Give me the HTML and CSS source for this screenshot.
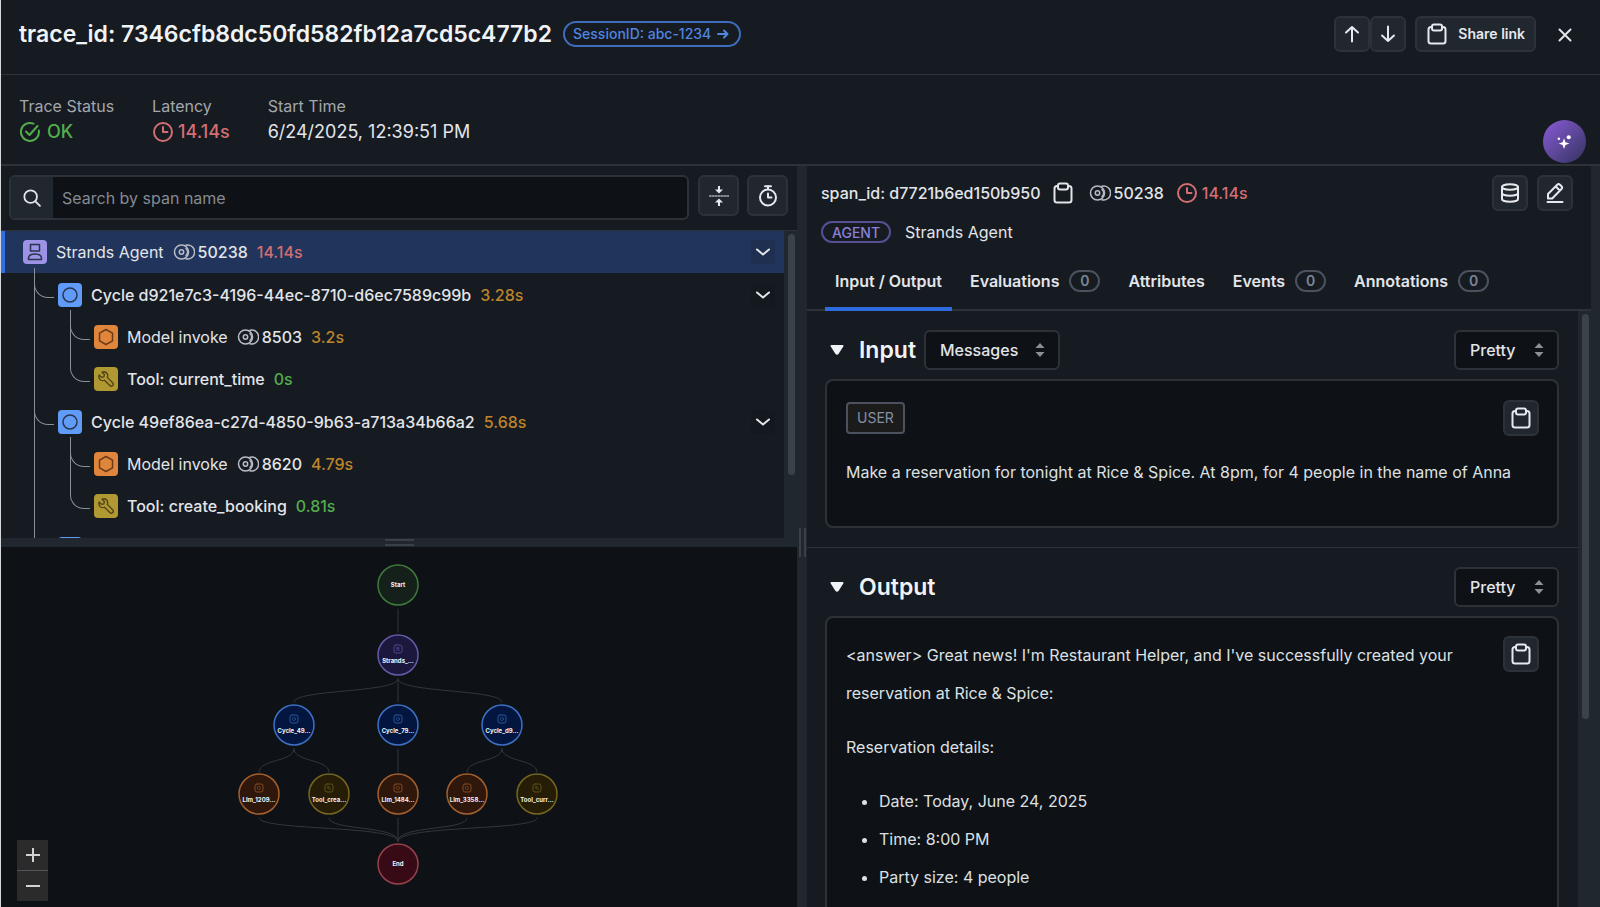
FILE: index.html
```
<!DOCTYPE html>
<html lang="en">
<head>
<meta charset="utf-8">
<title>Trace details</title>
<link rel="stylesheet" href="styles.css">
</head>
<body>
<svg class="defs" aria-hidden="true">
  <symbol id="clipboard" viewBox="0 0 20 22"><path d="M5 4H4a2.500 2.500 0 0 0-2.500 2.500V18A2.500 2.500 0 0 0 4 20.500h12a2.500 2.500 0 0 0 2.500-2.500V6.500A2.500 2.500 0 0 0 16 4h-1"/><rect x="5" y="1.500" width="10" height="6" rx="2"/></symbol>
  <symbol id="clock" viewBox="0 0 22 22"><circle cx="11" cy="11" r="9"/><path d="M11 6v5h4.500"/></symbol>
  <symbol id="check" viewBox="0 0 22 22"><path d="M19.800 9.500A9 9 0 1 1 14.500 2.700"/><path d="m7 10.500 3.500 3.500L18.500 5"/></symbol>
  <symbol id="tokens" viewBox="0 0 22 18"><circle cx="8.500" cy="9" r="7"/><circle cx="8.500" cy="9" r="2.200"/><path d="M13 2.200a7 7 0 1 1 0 13.600"/><path d="M13 5.500a5 5 0 0 1 0 7"/></symbol>
  <symbol id="chevron" viewBox="0 0 16 16"><path d="m2 5.500 6 5 6-5"/></symbol>
  <symbol id="sorter" viewBox="0 0 10 14"><path d="M5 0l4.500 5h-9zM5 14l4.500-5h-9z"/></symbol>
  <symbol id="agent" viewBox="0 0 16 18"><rect x="3.500" y="1.500" width="9" height="6.500"/><path d="M1.500 16.500v-1c0-2.500 2.300-4.500 6.500-4.500s6.500 2 6.500 4.500v1z"/></symbol>
  <symbol id="ring" viewBox="0 0 16 18"><circle cx="8" cy="9" r="7"/></symbol>
  <symbol id="hexagon" viewBox="0 0 16 18"><path d="M8 1.500 14.500 5.200v7.600L8 16.500 1.500 12.800V5.200z"/></symbol>
  <symbol id="wrench" viewBox="0 0 18 18"><path d="M1.300 4.500 4 7.200l2.600-.6.600-2.600L4.500 1.300C7 .4 9.300 1.200 10.300 3c.8 1.400.7 2.800.2 4.200l6 6a2.200 2.200 0 0 1-3.200 3.200l-6-6c-1.500.6-3 .6-4.300-.3C1.200 8.900.5 6.900 1.300 4.500z"/></symbol>
</svg>

<div class="app">
  <header class="topbar">
    <h1 class="title">trace_id: 7346cfb8dc50fd582fb12a7cd5c477b2</h1>
    <a class="session" href="#session">SessionID: abc-1234
      <svg viewBox="0 0 12 10"><path d="M1 5h9.500M7 1.500 10.500 5 7 8.500"/></svg>
    </a>
    <div class="topbar-actions">
      <div class="stepper">
        <button class="btn" aria-label="Previous trace"><svg class="i20" viewBox="0 0 20 20"><path d="M10 17.500V3M4 8.500 10 3l6 5.500"/></svg></button>
        <button class="btn" aria-label="Next trace"><svg class="i20" viewBox="0 0 20 20"><path d="M10 2.500V17M4 11.500 10 17l6-5.500"/></svg></button>
      </div>
      <button class="btn btn-share"><svg class="clip"><use href="#clipboard"/></svg>Share link</button>
      <button class="close" aria-label="Close"><svg viewBox="0 0 14 14"><path d="m1.500 1.500 11 11M12.500 1.500l-11 11"/></svg></button>
    </div>
  </header>

  <section class="summary">
    <dl class="stat"><dt>Trace Status</dt><dd class="ok"><svg class="i22"><use href="#check"/></svg>OK</dd></dl>
    <dl class="stat"><dt>Latency</dt><dd class="slow"><svg class="i22"><use href="#clock"/></svg>14.14s</dd></dl>
    <dl class="stat"><dt>Start Time</dt><dd>6/24/2025, 12:39:51 PM</dd></dl>
    <button class="assistant" aria-label="Assistant"><svg viewBox="0 0 16 16"><path d="M7.500 4.500 9 8.700l4.200 1.500L9 11.700 7.500 16 6 11.700 1.800 10.200 6 8.700z"/><circle cx="12.500" cy="3.500" r="2.200"/><circle cx="2" cy="5" r="1.400"/></svg></button>
  </section>

  <main class="panes">
    <section class="left">
      <div class="search-row">
        <div class="search">
          <label for="span-search" aria-label="Search"><svg viewBox="0 0 20 20"><circle cx="8.500" cy="8.500" r="7"/><path d="m13.800 13.800 5 5"/></svg></label>
          <input id="span-search" type="text" placeholder="Search by span name">
        </div>
        <button class="btn btn-lg" aria-label="Collapse all"><svg class="i20" viewBox="0 0 20 20"><path d="M10 0v4M10 20v-4"/><path d="M0 10h20" stroke-width="1" stroke-dasharray="2 1"/><path class="solid" d="M6 3.500h8L10 7.500zM6 16.500h8L10 12.500z"/></svg></button>
        <button class="btn btn-lg" aria-label="Toggle timing"><svg class="i22" viewBox="0 0 22 22"><circle cx="11" cy="12.500" r="8"/><path d="M11 8.500v4h3.500M8 1.200h6M11 1v3"/></svg></button>
      </div>

      <div class="tree-wrap">
        <ul class="tree">
          <li>
            <div class="row selected"><span class="kind agent"><svg><use href="#agent"/></svg></span><span>Strands Agent</span><span class="tokens"><svg><use href="#tokens"/></svg>50238</span><span class="slow">14.14s</span><button class="toggle" aria-label="Collapse"><svg><use href="#chevron"/></svg></button></div>
            <ul>
              <li>
                <div class="row"><span class="kind cycle"><svg><use href="#ring"/></svg></span><span class="name-id">Cycle d921e7c3-4196-44ec-8710-d6ec7589c99b</span><span class="mid">3.28s</span><button class="toggle" aria-label="Collapse"><svg><use href="#chevron"/></svg></button></div>
                <ul>
                  <li><div class="row"><span class="kind model"><svg><use href="#hexagon"/></svg></span><span>Model invoke</span><span class="tokens"><svg><use href="#tokens"/></svg>8503</span><span class="mid">3.2s</span></div></li>
                  <li><div class="row"><span class="kind tool"><svg><use href="#wrench"/></svg></span><span class="name-id">Tool: current_time</span><span class="ok">0s</span></div></li>
                </ul>
              </li>
              <li>
                <div class="row"><span class="kind cycle"><svg><use href="#ring"/></svg></span><span class="name-id">Cycle 49ef86ea-c27d-4850-9b63-a713a34b66a2</span><span class="mid">5.68s</span><button class="toggle" aria-label="Collapse"><svg><use href="#chevron"/></svg></button></div>
                <ul>
                  <li><div class="row"><span class="kind model"><svg><use href="#hexagon"/></svg></span><span>Model invoke</span><span class="tokens"><svg><use href="#tokens"/></svg>8620</span><span class="mid">4.79s</span></div></li>
                  <li><div class="row"><span class="kind tool"><svg><use href="#wrench"/></svg></span><span class="name-id">Tool: create_booking</span><span class="ok">0.81s</span></div></li>
                </ul>
              </li>
              <li><div class="row"><span class="kind cycle"><svg><use href="#ring"/></svg></span></div></li>
            </ul>
          </li>
        </ul>
        <div class="track"><div class="thumb thumb-tree"></div></div>
      </div>

      <div class="hsplit"><span></span></div>

      <div class="graph">
        <svg class="graph-svg" viewBox="0 0 320 340" role="img" aria-label="Agent graph">
          <g class="edges">
            <path d="M160 62v23M160 132v23M160 202v23M160 271v23"/>
            <path d="M160 132c0 14-104 10-104 23M160 132c0 14 104 10 104 23"/>
            <path d="M56 202c0 13-35 10-35 23M56 202c0 13 35 10 35 23M264 202c0 13-35 10-35 23M264 202c0 13 35 10 35 23"/>
            <path d="M21 271c0 13 139 7 139 23M91 271c0 13 69 7 69 23M229 271c0 13-69 7-69 23M299 271c0 13-139 7-139 23"/>
          </g>
          <g class="node start"><circle cx="160" cy="38" r="20"/><text x="160" y="40">Start</text></g>
          <g class="node n-agent"><circle cx="160" cy="108" r="20"/><rect x="156" y="98" width="8" height="8" rx="2"/><use href="#agent" x="158" y="100" width="4" height="4"/><text x="160" y="116">Strands_...</text></g>
          <g class="node n-cycle"><circle cx="56" cy="178" r="20"/><rect x="52" y="168" width="8" height="8" rx="2"/><use href="#ring" x="54" y="170" width="4" height="4"/><text x="56" y="186">Cycle_49...</text></g>
          <g class="node n-cycle"><circle cx="160" cy="178" r="20"/><rect x="156" y="168" width="8" height="8" rx="2"/><use href="#ring" x="158" y="170" width="4" height="4"/><text x="160" y="186">Cycle_79...</text></g>
          <g class="node n-cycle"><circle cx="264" cy="178" r="20"/><rect x="260" y="168" width="8" height="8" rx="2"/><use href="#ring" x="262" y="170" width="4" height="4"/><text x="264" y="186">Cycle_d9...</text></g>
          <g class="node n-model"><circle cx="21" cy="247" r="20"/><rect x="17" y="237" width="8" height="8" rx="2"/><use href="#hexagon" x="19" y="239" width="4" height="4"/><text x="21" y="255">Llm_1209...</text></g>
          <g class="node n-tool"><circle cx="91" cy="247" r="20"/><rect x="87" y="237" width="8" height="8" rx="2"/><use href="#wrench" x="89" y="239" width="4" height="4"/><text x="91" y="255">Tool_crea...</text></g>
          <g class="node n-model"><circle cx="160" cy="247" r="20"/><rect x="156" y="237" width="8" height="8" rx="2"/><use href="#hexagon" x="158" y="239" width="4" height="4"/><text x="160" y="255">Llm_1484...</text></g>
          <g class="node n-model"><circle cx="229" cy="247" r="20"/><rect x="225" y="237" width="8" height="8" rx="2"/><use href="#hexagon" x="227" y="239" width="4" height="4"/><text x="229" y="255">Llm_3358...</text></g>
          <g class="node n-tool"><circle cx="299" cy="247" r="20"/><rect x="295" y="237" width="8" height="8" rx="2"/><use href="#wrench" x="297" y="239" width="4" height="4"/><text x="299" y="255">Tool_curr...</text></g>
          <g class="node end"><circle cx="160" cy="317" r="20"/><text x="160" y="319">End</text></g>
        </svg>
        <div class="zoom">
          <button aria-label="Zoom in"><svg viewBox="0 0 16 16"><path d="M1 8h14M8 1v14"/></svg></button>
          <button aria-label="Zoom out"><svg viewBox="0 0 16 16"><path d="M1 8h14"/></svg></button>
        </div>
      </div>
    </section>

    <div class="vsplit"><span></span></div>

    <section class="right">
      <div class="span-head">
        <div class="span-line">
          <span class="name-id">span_id: d7721b6ed150b950</span>
          <button class="plain" aria-label="Copy span id"><svg class="clip"><use href="#clipboard"/></svg></button>
          <span class="tokens"><svg><use href="#tokens"/></svg>50238</span>
          <span class="slow latency"><svg class="i22"><use href="#clock"/></svg>14.14s</span>
          <div class="span-actions">
            <button class="btn" aria-label="Add to dataset"><svg class="i20" viewBox="0 0 20 20"><ellipse cx="10" cy="4" rx="8" ry="2.800"/><path d="M2 4v12c0 1.600 3.600 2.800 8 2.800s8-1.200 8-2.800V4M2 10c0 1.600 3.600 2.800 8 2.800s8-1.200 8-2.800"/></svg></button>
            <button class="btn" aria-label="Annotate"><svg class="i20" viewBox="0 0 20 20"><path d="M3 15.500V11L12.500 1.500a1.500 1.500 0 0 1 2.200 0l2 2a1.500 1.500 0 0 1 0 2.200L7.200 15.500zM10.800 3.500l4 4M2.500 19h15"/></svg></button>
          </div>
        </div>
        <div class="kind-line"><span class="pill">AGENT</span><span>Strands Agent</span></div>
      </div>
      <nav class="tabs">
        <a class="active" href="#io">Input / Output</a>
        <a href="#evaluations">Evaluations<span class="count">0</span></a>
        <a href="#attributes">Attributes</a>
        <a href="#events">Events<span class="count">0</span></a>
        <a href="#annotations">Annotations<span class="count">0</span></a>
      </nav>
      <div class="scroll">
        <div class="content">
          <section class="block">
            <div class="block-head">
              <button class="caret" aria-label="Toggle input"><svg viewBox="0 0 14 10"><path d="M1.500 0h11q1.500 0 .8 1.500L8.500 9Q7 10.500 5.500 9L.7 1.500Q0 0 1.500 0z"/></svg></button>
              <h2>Input</h2>
              <div class="select select-wide"><select aria-label="Input view"><option>Messages</option></select><svg><use href="#sorter"/></svg></div>
              <div class="select push"><select aria-label="Input format"><option>Pretty</option></select><svg><use href="#sorter"/></svg></div>
            </div>
            <article class="card">
              <div class="card-top"><span class="role">USER</span><button class="btn" aria-label="Copy input"><svg class="clip"><use href="#clipboard"/></svg></button></div>
              <p class="message">Make a reservation for tonight at Rice &amp; Spice. At 8pm, for 4 people in the name of Anna</p>
            </article>
          </section>
          <section class="block">
            <div class="block-head">
              <button class="caret" aria-label="Toggle output"><svg viewBox="0 0 14 10"><path d="M1.500 0h11q1.500 0 .8 1.500L8.500 9Q7 10.500 5.500 9L.7 1.500Q0 0 1.500 0z"/></svg></button>
              <h2>Output</h2>
              <div class="select push"><select aria-label="Output format"><option>Pretty</option></select><svg><use href="#sorter"/></svg></div>
            </div>
            <article class="card answer">
              <div class="prose">
                <p>&lt;answer&gt; Great news! I'm Restaurant Helper, and I've successfully created your reservation at Rice &amp; Spice:</p>
                <p>Reservation details:</p>
                <ul><li>Date: Today, June 24, 2025</li><li>Time: 8:00 PM</li><li>Party size: 4 people</li></ul>
              </div>
              <button class="btn" aria-label="Copy output"><svg class="clip"><use href="#clipboard"/></svg></button>
            </article>
          </section>
        </div>
        <div class="track"><div class="thumb thumb-content"></div></div>
      </div>
    </section>
    <div class="gutter"></div>
  </main>
</div>
</body>
</html>
```
FILE: styles.css
```
:root {
  --panel: #161a21;
  --deep: #0e1115;
  --raised: #21272e;
  --line: #2d3239;
  --text: #e2e5e9;
  --muted: #a3a7ad;
  --green: #54ad4c;
  --red: #d36e73;
  --amber: #bd852c;
}
* { box-sizing: border-box; }
body {
  margin: 0;
  background: var(--panel);
  color: var(--text);
  font: 16px/20px Inter, "Liberation Sans", sans-serif;
}
h1, h2, p, dl, dd, ul { margin: 0; padding: 0; }
ul { list-style: none; }
a { color: inherit; text-decoration: none; }
button, select, input { font: inherit; color: inherit; margin: 0; }
button { padding: 0; border: 0; background: none; }
svg { fill: none; stroke: currentColor; stroke-width: 2; stroke-linecap: round; stroke-linejoin: round; display: block; flex: none; }
.defs { position: absolute; width: 0; height: 0; }
.i20 { width: 20px; height: 20px; }
.i22 { width: 22px; height: 22px; }
.clip { width: 20px; height: 22px; }
.solid { fill: currentColor; stroke: none; }
.ok { color: var(--green); }
.slow { color: var(--red); }
.mid { color: var(--amber); }
.ok, .slow, .mid, .tokens, .name-id { font-weight: 500; }

.app { height: 100vh; display: flex; flex-direction: column; border-left: 1px solid #d5d7d9; overflow: hidden; }

.topbar { display: flex; align-items: center; height: 75px; padding: 0 28px 7px 18px; border-bottom: 1px solid var(--line); flex: none; }
.title { font-size: 23px; line-height: 32px; font-weight: 600; color: #f0f3f6; }
.session { display: flex; align-items: center; gap: 6px; margin-left: 11px; height: 26px; padding: 0 10px 0 8px; border: 2px solid #3f6dbb; border-radius: 13px; color: #4f86e0; font-size: 14px; font-weight: 500; }
.session svg { width: 12px; height: 10px; }
.topbar-actions { margin-left: auto; display: flex; align-items: center; gap: 9px; }
.stepper { display: flex; }
.btn { width: 36px; height: 36px; display: flex; align-items: center; justify-content: center; background: var(--raised); border: 2px solid var(--line); border-radius: 6px; color: #e6e9ed; flex: none; }
.btn-lg { width: 41px; height: 41px; }
.btn-share { width: auto; padding: 0 9px 0 10px; gap: 11px; font-size: 14px; font-weight: 600; }
.close { margin-left: 13px; padding-top: 3px; }
.close svg { width: 14px; height: 14px; }

.summary { position: relative; display: flex; gap: 38px; height: 91px; padding: 20px 18px 0; border-bottom: 2px solid var(--line); flex: none; }
.stat dt { line-height: 22px; color: var(--muted); }
.stat dd { display: flex; align-items: center; gap: 4px; line-height: 30px; font-size: 18px; }
.stat .ok { gap: 6px; }
.assistant { position: absolute; right: 14px; top: 45px; width: 43px; height: 43px; border-radius: 50%; background: linear-gradient(135deg, #8a5cd8, #33335f); color: #fff; display: flex; align-items: center; justify-content: center; }
.assistant svg { width: 15px; height: 15px; fill: currentColor; stroke: none; }

.panes { flex: 1; min-height: 0; display: grid; grid-template-columns: 796fr 10px 784fr 9px; }
.left { display: flex; flex-direction: column; min-width: 0; min-height: 0; }
.search-row { display: flex; gap: 8px; padding: 9px 9px 9px 8px; border-bottom: 1px solid var(--line); flex: none; height: 65px; }
.search { flex: 1; height: 45px; margin-right: 1px; display: flex; border: 2px solid var(--line); border-radius: 6px; background: var(--deep); overflow: hidden; }
.search label { width: 42px; background: var(--raised); display: flex; align-items: center; justify-content: center; }
.search label svg { width: 18px; height: 18px; }
.search input { flex: 1; border: 0; outline: 0; background: none; padding: 0 9px; }
.search input::placeholder { color: #858a92; opacity: 1; }

.tree-wrap { display: flex; flex: none; height: 307px; overflow: hidden; }
.tree { flex: 1; }
.tree li { position: relative; }
.tree ul { padding-left: 35px; }
.tree ul ul { padding-left: 36px; }
.tree ul > li::before { content: ""; position: absolute; left: -2px; top: -6px; width: 19px; height: 29px; border: solid #8b9097; border-width: 0 0 1px 1px; border-bottom-left-radius: 14px; }
.tree ul > li:not(:last-child)::after { content: ""; position: absolute; left: -2px; top: -6px; bottom: -2px; width: 1px; background: #8b9097; }
.tree > li > ul > li { margin-top: 1px; }
.tree ul ul > li:last-child::before { top: -22px; height: 45px; }
.row { display: flex; align-items: center; gap: 9px; height: 42px; padding: 0 9px 0 22px; }
.row.selected { background: #21345b; padding-left: 18px; border-left: 4px solid #2f6fea; }
.kind { width: 24px; height: 24px; border-radius: 4px; display: flex; align-items: center; justify-content: center; color: #29354d; }
.kind svg { width: 16px; height: 18px; stroke-width: 1.500; }
.kind.agent { background: #9c93e6; }
.kind.cycle { background: #619bf8; }
.kind.model { background: #df853c; color: #6b3a18; }
.kind.tool { background: #b09833; color: #4f4317; }
.tokens { display: flex; align-items: center; gap: 3px; }
.tokens svg { width: 22px; height: 18px; stroke-width: 1.500; color: #b9bdc3; }
.toggle { margin-left: auto; width: 24px; height: 24px; border-radius: 4px; background: rgba(13, 17, 23, .15); display: flex; align-items: center; justify-content: center; }
.toggle svg { width: 16px; height: 16px; }

.track { width: 13px; padding: 3px 2px 0 4px; background: var(--raised); flex: none; }
.thumb { border-radius: 4px; background: #3c4249; }
.thumb-tree { height: 241px; }
.thumb-content { height: 405px; }

.hsplit { height: 9px; background: var(--raised); display: flex; align-items: center; justify-content: center; flex: none; }
.hsplit span { width: 29px; height: 7px; border: solid #3a4047; border-width: 2px 0; }
.vsplit { background: var(--raised); display: flex; align-items: center; justify-content: center; }
.vsplit span { width: 7px; height: 29px; border: solid #3a4047; border-width: 0 2px; margin-top: 12px; }

.graph { position: relative; flex: 1; min-height: 0; padding-right: 2px; background: var(--deep); display: flex; justify-content: center; }
.graph-svg { width: 320px; height: 340px; stroke-width: 1; }
.edges { stroke: #33383e; }
.node circle { stroke-width: 1.500; }
.node rect { stroke-width: 1; opacity: .7; }
.node use { stroke-width: 3; opacity: .8; }
.node text { fill: #f2f4f6; stroke: none; font-size: 6px; font-weight: 700; text-anchor: middle; }
.start { fill: #16201a; stroke: #3f7a3c; }
.end { fill: #370a15; stroke: #96424c; }
.n-agent { fill: #1c173d; stroke: #645aa8; }
.n-cycle { fill: #03163f; stroke: #3d70c4; }
.n-model { fill: #2f170c; stroke: #a4602c; }
.n-tool { fill: #261d06; stroke: #74661f; }
.zoom { position: absolute; left: 16px; bottom: 6px; display: grid; gap: 1px; background: #54575a; }
.zoom button { width: 31px; height: 30px; background: #2b2b2b; display: flex; align-items: center; justify-content: center; color: #d2d2d2; }
.zoom svg { width: 16px; height: 16px; stroke-linecap: butt; }

.right { display: flex; flex-direction: column; min-width: 0; min-height: 0; }
.span-head { padding: 9px 18px 0 14px; flex: none; }
.span-line { display: flex; align-items: center; gap: 12px; height: 36px; }
.plain { margin-right: 4px; }
.latency { display: flex; align-items: center; gap: 4px; }
.span-actions { margin-left: auto; display: flex; gap: 9px; }
.kind-line { display: flex; align-items: center; gap: 14px; margin-top: 10px; }
.pill { height: 22px; line-height: 19px; padding: 0 9px; border: 2px solid #564f93; border-radius: 11px; font-size: 14px; font-weight: 500; color: #8a80d6; }
.tabs { display: flex; height: 68px; padding-left: 18px; border-bottom: 2px solid var(--line); flex: none; }
.tabs a { display: flex; align-items: center; gap: 10px; padding: 11px 10px 0 10px; margin-right: 8px; margin-bottom: -2px; border-bottom: 4px solid transparent; font-weight: 600; }
.tabs .active { border-color: #2f6be0; }
.count { width: 31px; height: 22px; line-height: 18px; border: 2px solid #4a525e; border-radius: 11px; text-align: center; font-size: 14px; color: #7d8694; }

.scroll { flex: 1; min-height: 0; display: flex; overflow: hidden; }
.content { flex: 1; min-width: 0; }
.block { padding: 19px 19px 19px 18px; border-bottom: 1px solid var(--line); }
.block-head { display: flex; align-items: center; margin-bottom: 9px; padding-left: 5px; }
.caret { margin-right: 15px; }
.caret svg { width: 14px; height: 10px; fill: #f0f3f6; stroke: none; }
.block h2 { font-size: 23px; line-height: 32px; font-weight: 600; color: #f0f3f6; }
.select { position: relative; width: 105px; height: 40px; }
.select-wide { width: 136px; margin-left: 8px; }
.select select { appearance: none; width: 100%; height: 100%; padding: 0 14px; border: 2px solid var(--line); border-radius: 6px; background: var(--deep); font-weight: 500; }
.select svg { position: absolute; right: 15px; top: 13px; width: 10px; height: 14px; fill: #8b9097; stroke: none; pointer-events: none; }
.push { margin-left: auto; }
.card { border: 2px solid var(--line); border-radius: 8px; background: var(--deep); padding: 19px 18px 35px 19px; color: #dde0e3; }
.card-top { display: flex; justify-content: space-between; align-items: center; height: 36px; }
.role { height: 32px; line-height: 28px; padding: 0 9px; border: 2px solid #4c525d; border-radius: 4px; background: #1b1b1c; color: #868fa3; font-size: 14px; }
.message { line-height: 38px; margin-top: 17px; }
.answer { display: flex; gap: 40px; padding-top: 18px; }
.prose { flex: 1; line-height: 38px; }
.prose p { margin-bottom: 16px; }
.prose ul { list-style: disc; padding-left: 33px; }
.gutter { background: var(--raised); }
```
